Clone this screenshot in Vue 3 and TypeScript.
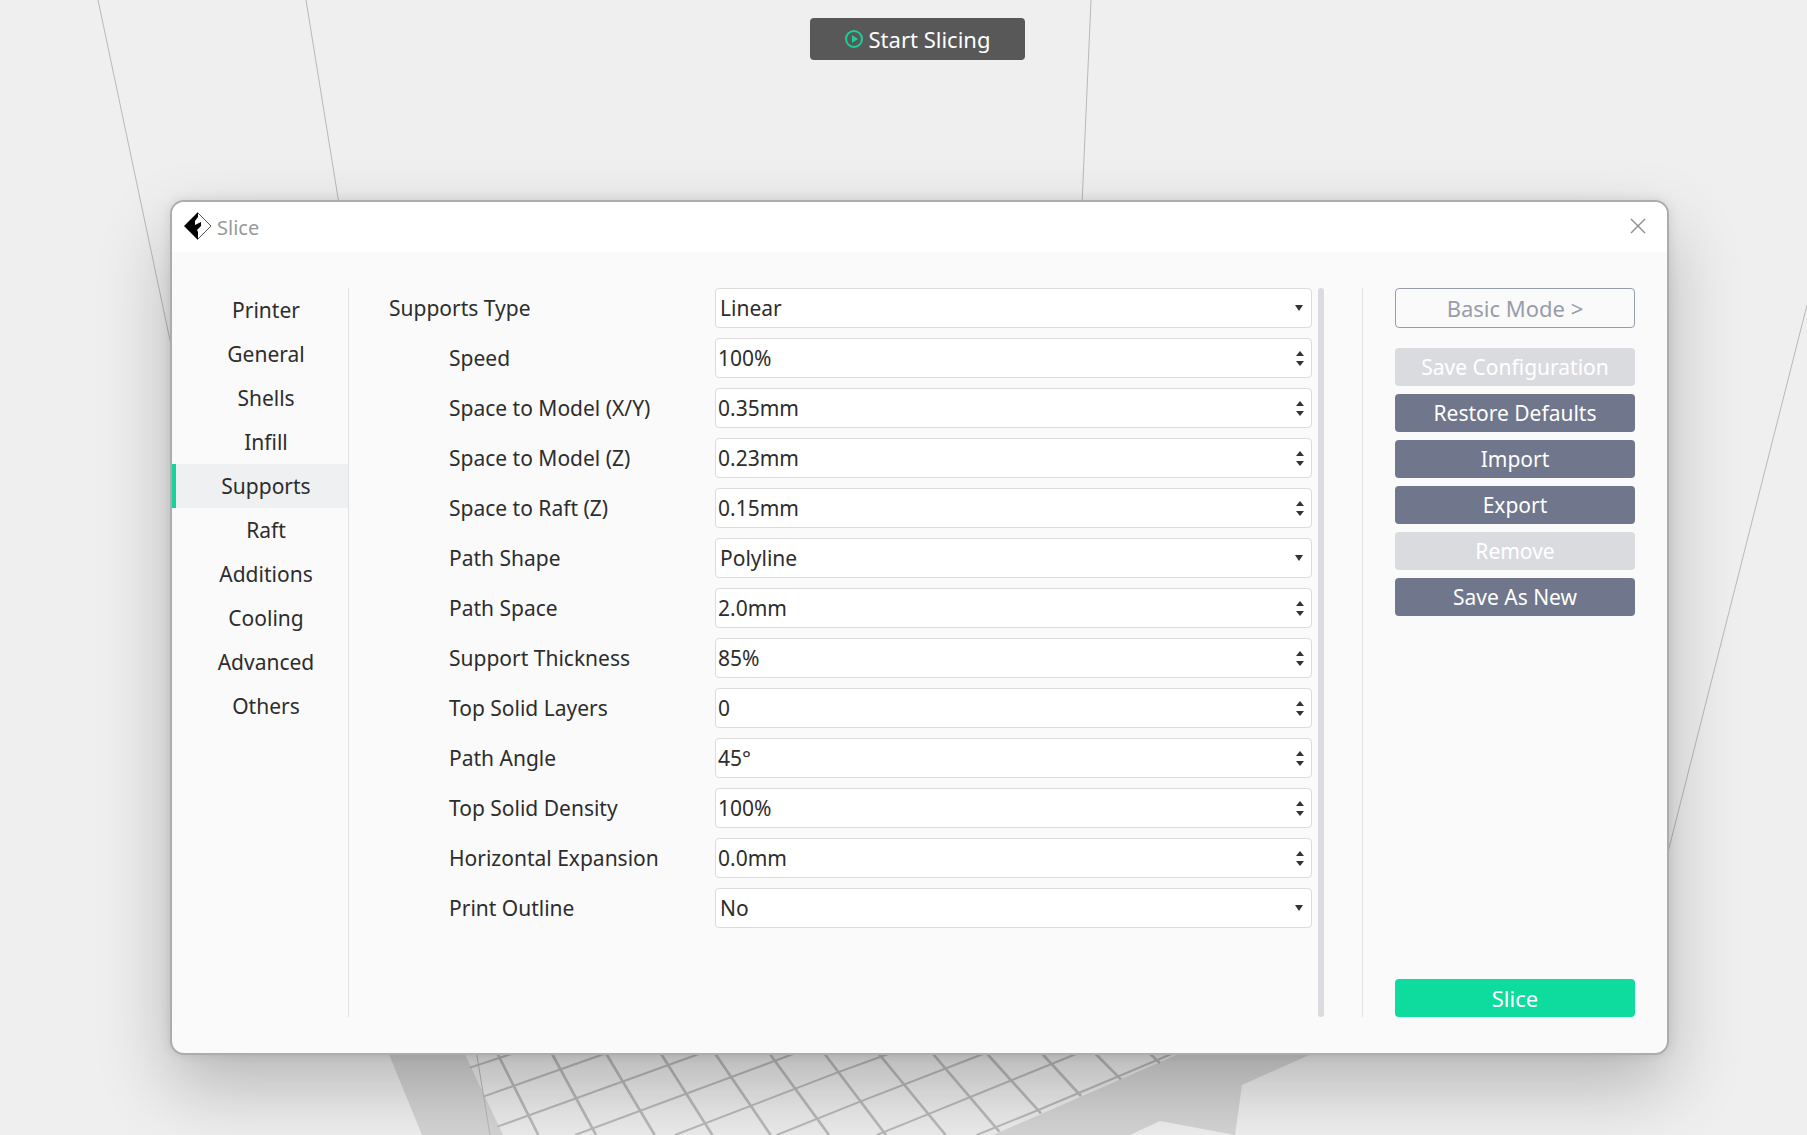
<script setup lang="ts">
import { ref } from 'vue'

interface Field {
  id: string
  label: string
  kind: 'select' | 'spin'
  value: string
  options?: string[]
}

interface Action {
  label: string
  disabled?: boolean
}

const categories: string[] = [
  'Printer', 'General', 'Shells', 'Infill', 'Supports',
  'Raft', 'Additions', 'Cooling', 'Advanced', 'Others',
]
const active = ref('Supports')

const fields = ref<Field[]>([
  { id: 'type', label: 'Supports Type', kind: 'select', value: 'Linear', options: ['Linear'] },
  { id: 'speed', label: 'Speed', kind: 'spin', value: '100%' },
  { id: 'space-xy', label: 'Space to Model (X/Y)', kind: 'spin', value: '0.35mm' },
  { id: 'space-z', label: 'Space to Model (Z)', kind: 'spin', value: '0.23mm' },
  { id: 'space-raft', label: 'Space to Raft (Z)', kind: 'spin', value: '0.15mm' },
  { id: 'path-shape', label: 'Path Shape', kind: 'select', value: 'Polyline', options: ['Polyline'] },
  { id: 'path-space', label: 'Path Space', kind: 'spin', value: '2.0mm' },
  { id: 'thickness', label: 'Support Thickness', kind: 'spin', value: '85%' },
  { id: 'top-layers', label: 'Top Solid Layers', kind: 'spin', value: '0' },
  { id: 'path-angle', label: 'Path Angle', kind: 'spin', value: '45°' },
  { id: 'top-density', label: 'Top Solid Density', kind: 'spin', value: '100%' },
  { id: 'expansion', label: 'Horizontal Expansion', kind: 'spin', value: '0.0mm' },
  { id: 'outline', label: 'Print Outline', kind: 'select', value: 'No', options: ['No', 'Yes'] },
])

const actions: Action[] = [
  { label: 'Save Configuration', disabled: true },
  { label: 'Restore Defaults' },
  { label: 'Import' },
  { label: 'Export' },
  { label: 'Remove', disabled: true },
  { label: 'Save As New' },
]

function step(field: Field, direction: number): void {
  const match = field.value.match(/^(-?\d+)(?:\.(\d+))?(.*)$/)
  if (!match) return
  const digits = match[2]?.length ?? 0
  const next = parseFloat(field.value) + direction / 10 ** digits
  field.value = next.toFixed(digits) + match[3]
}
</script>

<template>
  <main class="workspace">
    <svg class="viewport" viewBox="0 0 1807 1135" preserveAspectRatio="xMidYMax slice" aria-hidden="true">
      <path class="plate" d="M388 1052H1316L1242 1085L1235 1135L1160 1121L1130 1135H422Z" />
      <path class="bed" d="M463 1050L503 1135H993L1188 1050Z" />
      <g class="grid" transform="translate(360 1000) scale(0.333333)">
        <path
          class="columns"
          d="M407 150L535 405M570 150L708 405M732 150L884 405M896 150L1057 405M1058 150L1232 405M1221 150L1407 405M1385 150L1578 405M1547 150L1757 405M1709 150L1918 395M1871 150L2043 340M2036 150L2163 288M2195 150L2283 238M2358 150L2400 190"
        />
        <path
          class="rows"
          d="M330 203L490 150M372 289L766 150M412 380L1050 150M645 405L1332 150M945 405L1433 217L1618 150M1250 405L1500 305L1900 150M1550 405L1703 343L2178 150M1850 405L2035 330L2463 150"
        />
      </g>
      <path class="edges" d="M98 0L171 345M306 0L339 204M1091 0L1082 204M1807 305L1667 856M476 1050L490 1135" />
    </svg>

    <div class="toolbar">
      <button type="button" class="start">
        <svg width="18" height="18" viewBox="0 0 18 18" aria-hidden="true">
          <circle cx="9" cy="9" r="8" fill="none" stroke="#1ccf98" stroke-width="2" />
          <path d="M7 5L13 9L7 13Z" fill="#1ccf98" />
        </svg>
        Start Slicing
      </button>
    </div>

    <section class="dialog" role="dialog" aria-labelledby="dialog-title">
      <header class="titlebar">
        <svg width="28" height="28" viewBox="0 0 28 28" aria-hidden="true">
          <path d="M14 1L27 14L14 27" fill="#fff" stroke="#555" stroke-width="1" />
          <path d="M14 0V5L11 9V13L17 10V14L13 18L14 20V28L0 14Z" fill="#000" />
        </svg>
        <h1 id="dialog-title">Slice</h1>
        <button type="button" class="close" aria-label="Close">
          <svg width="16" height="16" viewBox="0 0 16 16" aria-hidden="true">
            <path d="M1 1L15 15M15 1L1 15" stroke="#8c8c8c" stroke-width="1.4" />
          </svg>
        </button>
      </header>

      <div class="content">
        <nav class="categories">
          <button
            v-for="name in categories"
            :key="name"
            type="button"
            :class="{ active: name === active }"
            @click="active = name"
          >
            {{ name }}
          </button>
        </nav>

        <form class="settings" @submit.prevent>
          <div v-for="field in fields" :key="field.id" class="field">
            <label :for="field.id">{{ field.label }}</label>
            <div v-if="field.kind === 'select'" class="control">
              <select :id="field.id" v-model="field.value">
                <option v-for="option in field.options" :key="option">{{ option }}</option>
              </select>
              <svg class="caret" width="8" height="6" viewBox="0 0 8 6" aria-hidden="true">
                <path d="M0 0H8L4 6Z" />
              </svg>
            </div>
            <div v-else class="control spin">
              <input :id="field.id" v-model="field.value" type="text" />
              <div class="stepper">
                <button type="button" :aria-label="`Increase ${field.label}`" @click="step(field, 1)">
                  <svg width="8" height="5" viewBox="0 0 8 5" aria-hidden="true"><path d="M0 5H8L4 0Z" /></svg>
                </button>
                <button type="button" :aria-label="`Decrease ${field.label}`" @click="step(field, -1)">
                  <svg width="8" height="5" viewBox="0 0 8 5" aria-hidden="true"><path d="M0 0H8L4 5Z" /></svg>
                </button>
              </div>
            </div>
          </div>
        </form>
        <div class="scrollbar"></div>

        <aside class="actions">
          <button type="button" class="mode">Basic Mode &gt;</button>
          <button
            v-for="action in actions"
            :key="action.label"
            type="button"
            class="action"
            :disabled="action.disabled"
          >
            {{ action.label }}
          </button>
          <button type="button" class="action slice">Slice</button>
        </aside>
      </div>
    </section>
  </main>
</template>

<style>
body {
  margin: 0;
}
</style>

<style scoped>
.workspace {
  position: relative;
  display: flex;
  flex-direction: column;
  gap: 140px;
  box-sizing: border-box;
  min-height: 100vh;
  padding: 18px 138px 80px 170px;
  overflow: hidden;
  background: #efefef;
  color: #2d2d2d;
  font: 21px/28px "Noto Sans", "Open Sans", sans-serif;
}

button,
input,
select {
  box-sizing: border-box;
  margin: 0;
  padding: 0;
  border: 0;
  background: none;
  color: inherit;
  font: inherit;
}

svg {
  display: block;
  flex: none;
}

.viewport {
  position: absolute;
  inset: 0;
  width: 100%;
  height: 100%;
}

.plate {
  fill: #d4d4d4;
}

.bed {
  fill: #ececec;
}

.grid {
  fill: none;
  stroke: #b9b9b9;
}

.columns {
  stroke-width: 8;
}

.rows {
  stroke-width: 6;
}

.edges {
  fill: none;
  stroke: #b8b8b8;
  stroke-width: 1;
}

.toolbar {
  position: relative;
  display: flex;
  justify-content: center;
  padding-right: 4px;
}

.start {
  display: flex;
  align-items: center;
  justify-content: center;
  gap: 6px;
  width: 215px;
  height: 42px;
  padding-bottom: 1px;
  border-radius: 4px;
  background: #585858;
  color: #fff;
  font-size: 22px;
}

.dialog {
  position: relative;
  flex: 1;
  display: flex;
  flex-direction: column;
  overflow: hidden;
  border: 2px solid #acacac;
  border-radius: 14px;
  background: #fafafa;
  box-shadow: 0 32px 72px rgba(0, 0, 0, 0.24), 0 0 12px rgba(0, 0, 0, 0.1);
}

.titlebar {
  display: flex;
  align-items: center;
  gap: 5px;
  height: 48px;
  padding: 0 21px 2px 12px;
  background: #fff;
}

.titlebar h1 {
  margin: 0;
  padding-top: 3px;
  color: #999;
  font-size: 20px;
  font-weight: 400;
}

.close {
  margin-left: auto;
}

.content {
  flex: 1;
  display: flex;
  padding: 36px 32px 36px 0;
}

.categories {
  display: flex;
  flex-direction: column;
  width: 176px;
  border-right: 1px solid #e2e2e4;
}

.categories button {
  height: 44px;
  padding-left: 8px;
  border-left: 4px solid transparent;
}

.categories .active {
  border-color: #14d49a;
  background: #eff0f2;
}

.settings {
  flex: 1;
  display: flex;
  flex-direction: column;
  gap: 10px;
  padding: 0 6px 0 40px;
}

.field {
  display: flex;
  align-items: center;
  height: 40px;
}

.field label {
  box-sizing: border-box;
  width: 326px;
  padding-left: 60px;
}

.field:first-child label {
  padding-left: 0;
}

.control {
  flex: 1;
  display: flex;
  align-items: center;
  box-sizing: border-box;
  height: 40px;
  padding-right: 8px;
  border: 1px solid #dcdcde;
  border-radius: 4px;
  background: #fff;
}

.control.spin {
  padding-right: 7px;
}

.control input,
.control select {
  flex: 1;
  min-width: 0;
  height: 38px;
  padding-left: 2px;
  outline: 0;
  appearance: none;
}

.control select {
  padding-left: 4px;
}

.control svg {
  fill: #333;
}

.stepper {
  display: flex;
  flex-direction: column;
  gap: 5px;
}

.scrollbar {
  width: 6px;
  border-radius: 3px;
  background: #dadbdf;
}

.actions {
  display: flex;
  flex-direction: column;
  gap: 8px;
  width: 240px;
  margin-left: 38px;
  padding-left: 32px;
  border-left: 1px solid #e2e2e4;
}

.actions button {
  border-radius: 4px;
}

.actions .mode {
  height: 40px;
  margin-bottom: 12px;
  border: 1px solid #989dab;
  color: #989dab;
  font-size: 22px;
}

.action {
  height: 38px;
  background: #70768b;
  color: #fff;
}

.action:disabled {
  background: #dadbdf;
}

.actions .slice {
  margin-top: auto;
  background: #0edb9e;
  font-size: 22px;
}
</style>
